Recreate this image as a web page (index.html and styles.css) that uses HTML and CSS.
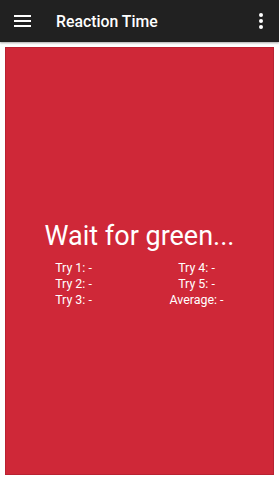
FILE: index.html
```html
<!DOCTYPE html>
<html>
<head>
<meta charset="utf-8">
<link rel="stylesheet" href="styles.css">
</head>
<body>
<header class="appbar">
  <svg class="menu" width="18" height="14" viewBox="0 0 18 14"><rect x="0" y="1" width="17" height="2" fill="#fff"/><rect x="0" y="6" width="17" height="2" fill="#fff"/><rect x="0" y="11" width="17" height="2" fill="#fff"/></svg>
  <h1 class="title">Reaction Time</h1>
  <svg class="more" width="6" height="18" viewBox="0 0 6 18"><circle cx="3" cy="3" r="2" fill="#fff"/><circle cx="3" cy="9" r="2" fill="#fff"/><circle cx="3" cy="15" r="2" fill="#fff"/></svg>
</header>
<main class="panel">
  <div class="msg">Wait for green...</div>
  <div class="results">
    <div>Try 1: -</div><div>Try 4: -</div>
    <div>Try 2: -</div><div>Try 5: -</div>
    <div>Try 3: -</div><div>Average: -</div>
  </div>
</main>
</body>
</html>
```
FILE: styles.css
```css
html, body { margin: 0; padding: 0; }
body { background: #fff; font-family: Roboto, "Noto Sans", sans-serif; width: 279px; height: 480px; overflow: hidden; }
.appbar { height: 42px; background: #212121; display: flex; align-items: center; box-shadow: 0 1px 2px rgba(0,0,0,0.35); position: relative; }
.menu { margin-left: 14px; }
.title { margin: 0 0 0 24px; font-size: 15.8px; font-weight: 500; color: #fff; flex: 1; }
.more { margin-right: 15px; }
.panel { margin: 5px; height: 426px; background: #cf2838; border: 1px solid #b92232; display: flex; flex-direction: column; justify-content: center; color: #fff; }
.msg { text-align: center; font-size: 27px; line-height: 32px; margin-top: 5px; }
.results { display: grid; grid-template-columns: 123px 123px; margin: 8px 0 0 6px; font-size: 12.4px; line-height: 16px; text-align: center; }
```
